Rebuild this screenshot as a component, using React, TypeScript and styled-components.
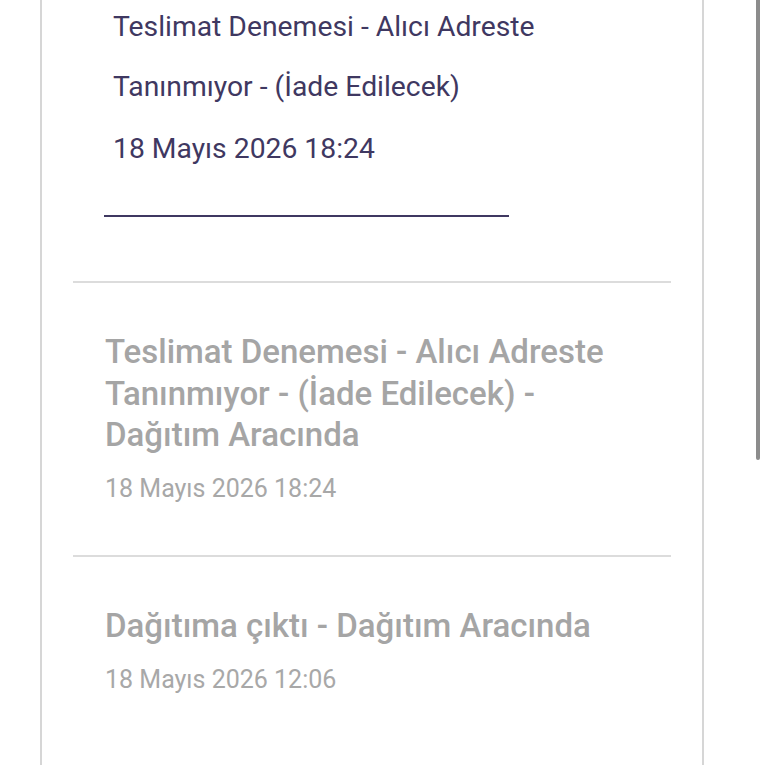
import React from 'react';
import styled, { createGlobalStyle } from 'styled-components';

const GlobalStyle = createGlobalStyle`
  html, body {
    margin: 0;
    padding: 0;
    background: #ffffff;
    font-family: Roboto, 'Noto Sans', sans-serif;
    overflow: hidden;
  }
`;

const Page = styled.div`
  position: relative;
  height: 768px;
  overflow: hidden;
`;

const Card = styled.div`
  margin-left: 40px;
  width: 660px;
  height: 768px;
  border-left: 2px solid #d6d6d6;
  border-right: 2px solid #d6d6d6;
  background: #ffffff;
`;

const Current = styled.div`
  margin-top: -3px;
  padding-left: 71px;
  color: #3f3861;
`;

const CurrentTitle = styled.div`
  width: 450px;
  font-size: 28.3px;
  line-height: 60px;
`;

const CurrentDate = styled.div`
  margin-top: 2px;
  font-size: 28.3px;
  line-height: 60px;
`;

const Underline = styled.div`
  margin: 36px 0 0 -9px;
  width: 405px;
  height: 2px;
  background: #3f3861;
`;

const List = styled.div`
  margin: 64px 31px 0;
`;

const Item = styled.div`
  border-top: 2px solid #dcdcdc;
  padding: 48px 40px 51px 32px;
`;

const ItemTitle = styled.div`
  font-size: 33px;
  font-weight: 500;
  line-height: 41.5px;
  color: #a5a5a5;
`;

const ItemDate = styled.div`
  margin-top: 18.5px;
  font-size: 25px;
  line-height: 30px;
  color: #a8a8a8;
`;

const Scrollbar = styled.div`
  position: absolute;
  top: -4px;
  left: 756px;
  width: 4px;
  height: 464px;
  border-radius: 2px;
  background: #8c8c8c;
`;

const history = [
  {
    title: 'Teslimat Denemesi - Alıcı Adreste Tanınmıyor - (İade Edilecek) - Dağıtım Aracında',
    date: '18 Mayıs 2026 18:24',
  },
  {
    title: 'Dağıtıma çıktı - Dağıtım Aracında',
    date: '18 Mayıs 2026 12:06',
  },
];

export default function App() {
  return (
    <Page>
      <GlobalStyle />
      <Card>
        <Current>
          <CurrentTitle>Teslimat Denemesi - Alıcı Adreste Tanınmıyor - (İade Edilecek)</CurrentTitle>
          <CurrentDate>18 Mayıs 2026 18:24</CurrentDate>
          <Underline />
        </Current>
        <List>
          {history.map((h, i) => (
            <Item key={i}>
              <ItemTitle>{h.title}</ItemTitle>
              <ItemDate>{h.date}</ItemDate>
            </Item>
          ))}
        </List>
      </Card>
      <Scrollbar />
    </Page>
  );
}
